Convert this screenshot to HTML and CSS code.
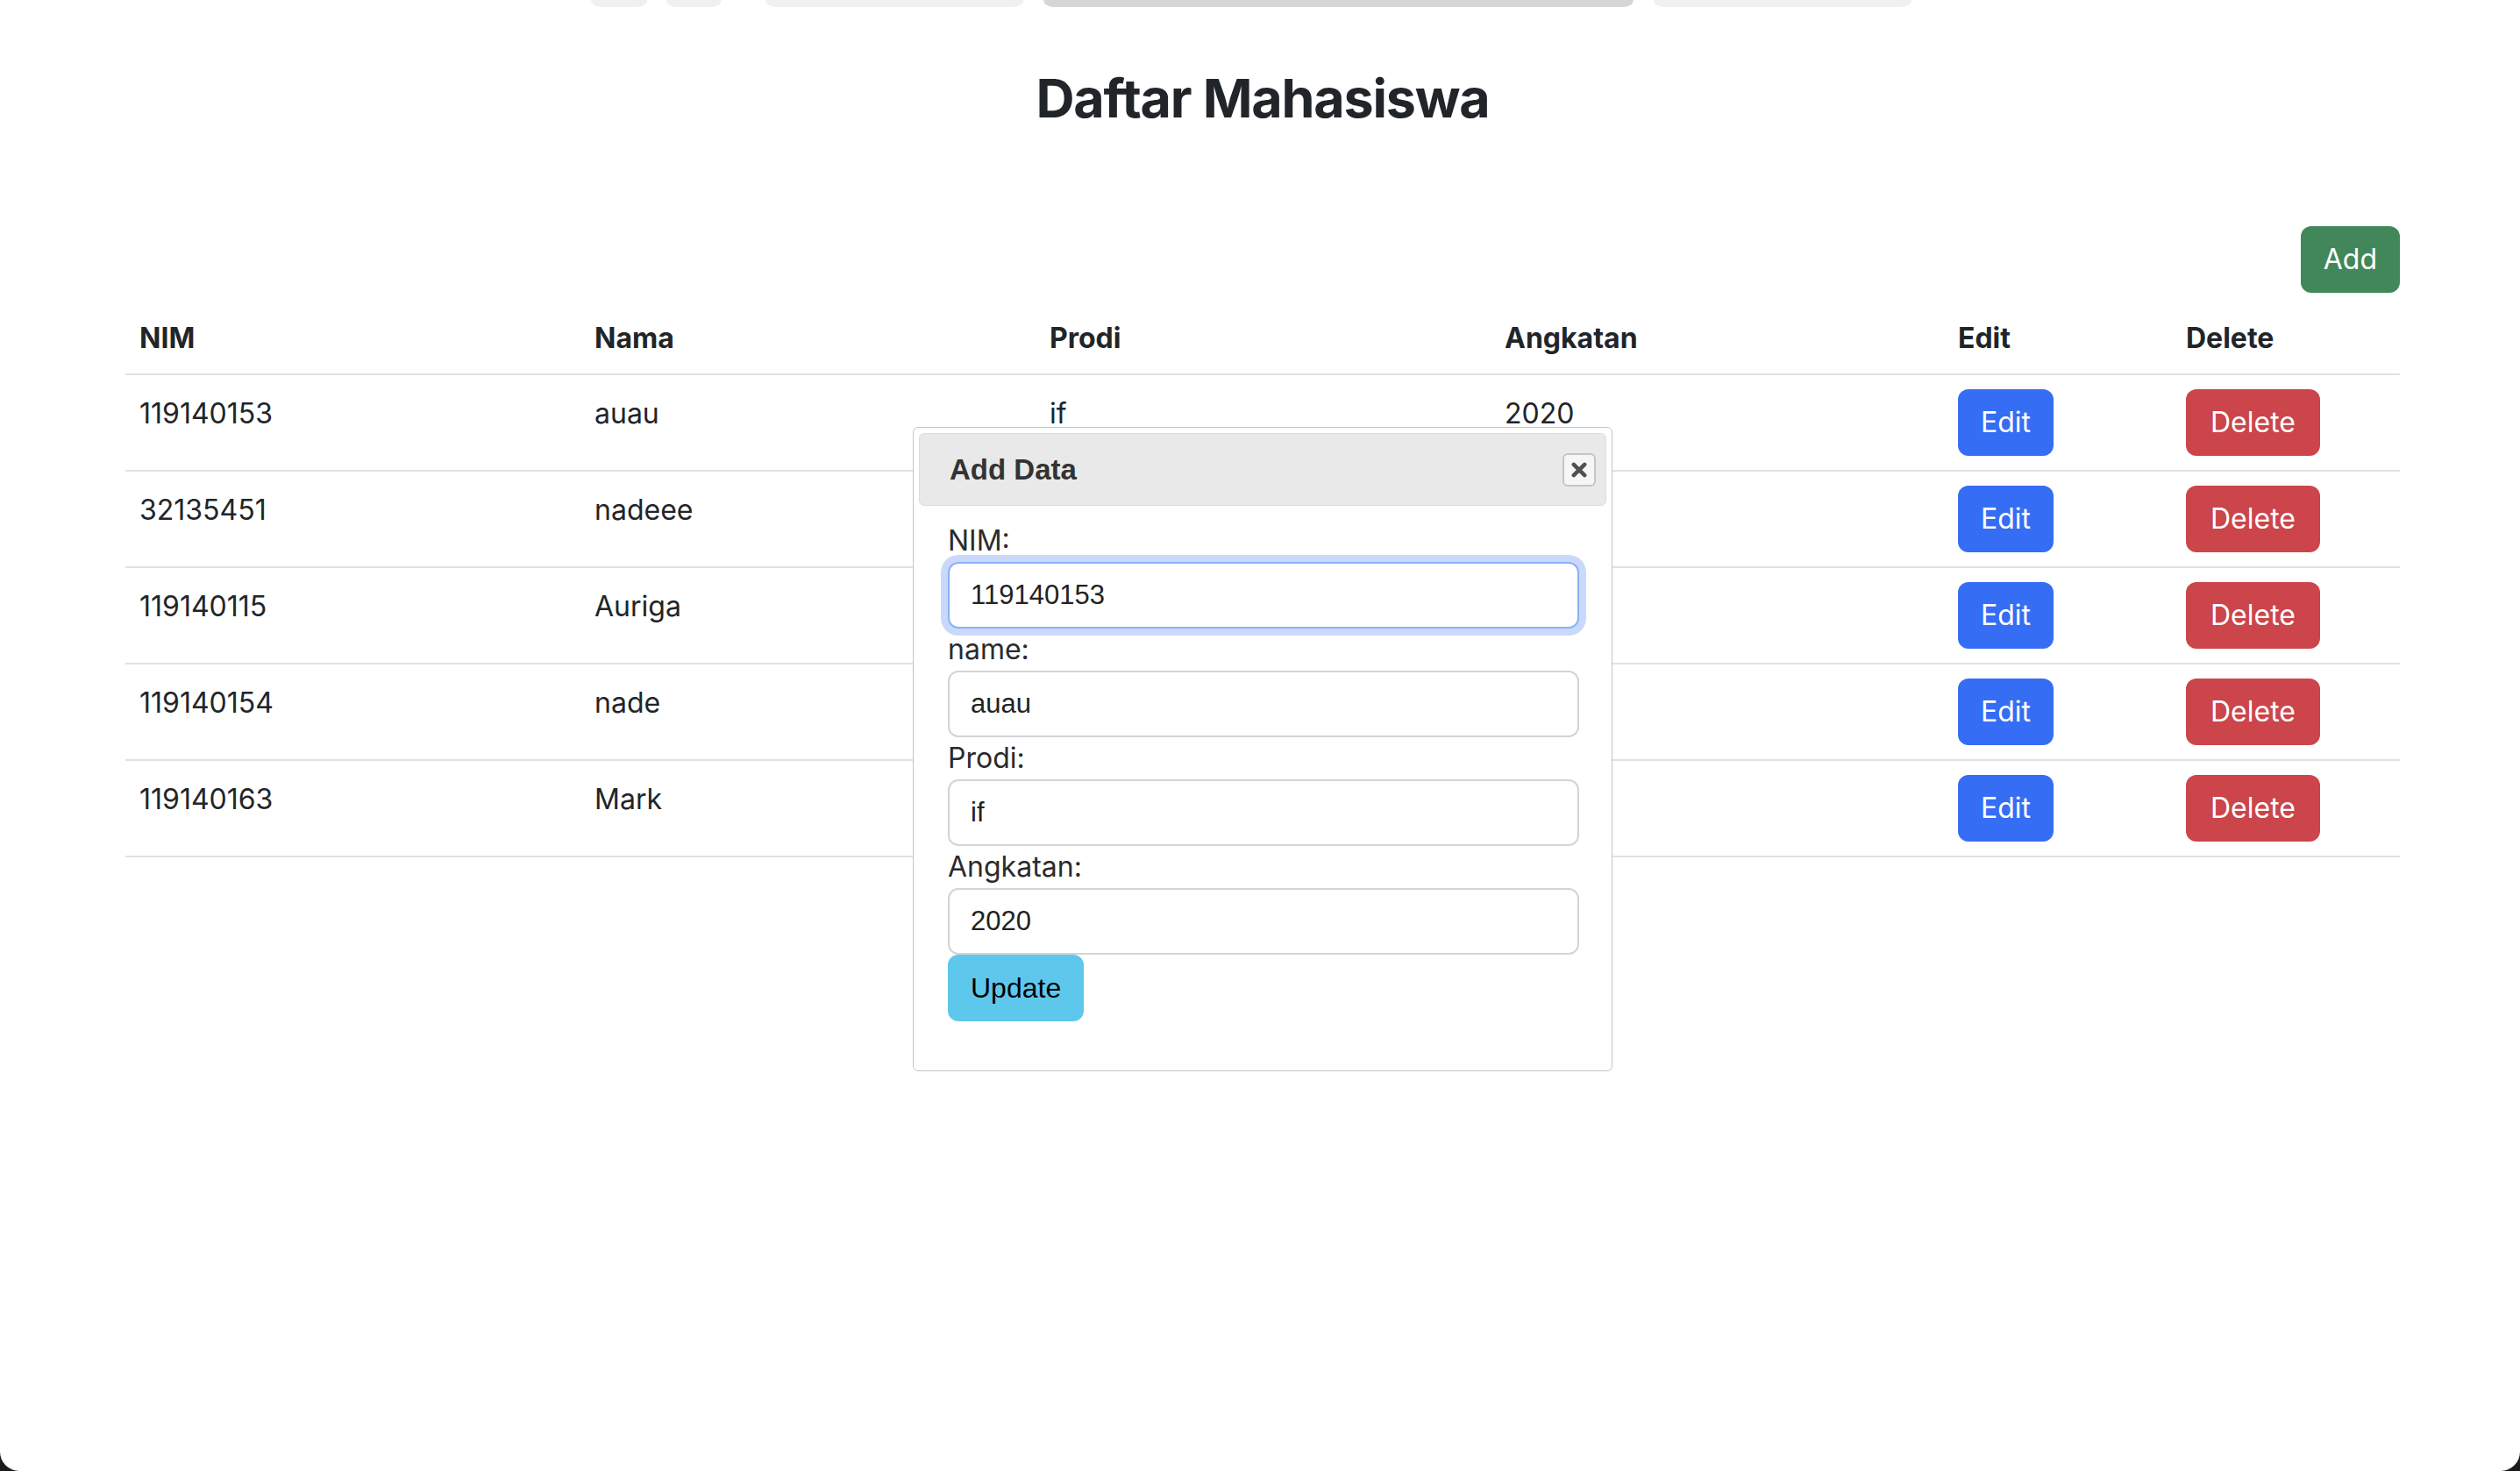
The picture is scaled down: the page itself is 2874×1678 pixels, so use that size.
FILE: index.html
```html
<!DOCTYPE html>
<html lang="id">
<head>
<meta charset="utf-8">
<title>Daftar Mahasiswa</title>
<link rel="stylesheet" href="styles.css">
</head>
<body>
<div class="window">
  <div class="tabs">
    <span class="tab tab-xs"></span>
    <span class="tab tab-xs2"></span>
    <span class="tab tab-md"></span>
    <span class="tab tab-lg"></span>
    <span class="tab tab-md2"></span>
  </div>

  <main class="container">
    <h2 class="title">Daftar Mahasiswa</h2>
    <div class="actions">
      <button class="btn btn-add">Add</button>
    </div>
    <table class="table">
      <colgroup>
        <col class="col-wide"><col class="col-wide"><col class="col-wide"><col class="col-wide2"><col class="col-btn"><col class="col-btn">
      </colgroup>
      <thead>
        <tr><th>NIM</th><th>Nama</th><th>Prodi</th><th>Angkatan</th><th>Edit</th><th>Delete</th></tr>
      </thead>
      <tbody>
        <tr><td>119140153</td><td>auau</td><td>if</td><td>2020</td><td class="cell-action"><button class="btn btn-edit">Edit</button></td><td class="cell-action"><button class="btn btn-delete">Delete</button></td></tr>
        <tr><td>32135451</td><td>nadeee</td><td>if</td><td>2020</td><td class="cell-action"><button class="btn btn-edit">Edit</button></td><td class="cell-action"><button class="btn btn-delete">Delete</button></td></tr>
        <tr><td>119140115</td><td>Auriga</td><td>if</td><td>2019</td><td class="cell-action"><button class="btn btn-edit">Edit</button></td><td class="cell-action"><button class="btn btn-delete">Delete</button></td></tr>
        <tr><td>119140154</td><td>nade</td><td>if</td><td>2019</td><td class="cell-action"><button class="btn btn-edit">Edit</button></td><td class="cell-action"><button class="btn btn-delete">Delete</button></td></tr>
        <tr><td>119140163</td><td>Mark</td><td>if</td><td>2019</td><td class="cell-action"><button class="btn btn-edit">Edit</button></td><td class="cell-action"><button class="btn btn-delete">Delete</button></td></tr>
      </tbody>
    </table>
  </main>

  <div class="dialog" role="dialog">
    <div class="dialog-titlebar">
      <span class="dialog-title">Add Data</span>
      <button class="dialog-close" title="Close">
        <svg class="close-icon" viewBox="0 0 16 16" aria-hidden="true"><path d="M2.5 2.5 L13.5 13.5 M13.5 2.5 L2.5 13.5" stroke="#505050" stroke-width="4" stroke-linecap="round" fill="none"/></svg>
      </button>
    </div>
    <div class="dialog-content">
      <form class="dialog-form">
        <label class="field-label">NIM:</label>
        <input class="field-input is-focused" type="text" value="119140153">
        <label class="field-label">name:</label>
        <input class="field-input" type="text" value="auau">
        <label class="field-label">Prodi:</label>
        <input class="field-input" type="text" value="if">
        <label class="field-label">Angkatan:</label>
        <input class="field-input" type="text" value="2020">
        <button type="button" class="btn-update">Update</button>
      </form>
    </div>
  </div>
</div>
</body>
</html>
```

FILE: styles.css
```css
html, body {
  margin: 0;
  padding: 0;
  background: #1c1c1c;
  overflow: hidden;
}

.window {
  position: relative;
  height: 1678px;
  background: #ffffff;
  border-radius: 0 0 22px 22px;
  font-family: "Inter", "Noto Sans", sans-serif;
  color: #212529;
}

/* top cut-off pills */
.tabs {
  display: flex;
  height: 8px;
  padding-left: 674px;
}
.tab {
  height: 8px;
  background: #f0f0f0;
  border-radius: 0 0 12px 12px / 0 0 8px 8px;
}
.tab-xs { width: 64px; margin-right: 22px; }
.tab-xs2 { width: 63px; margin-right: 50px; }
.tab-md { width: 294px; margin-right: 23px; }
.tab-lg { width: 673px; margin-right: 23px; background: #d6d6d6; }
.tab-md2 { width: 294px; }

.container {
  width: 2594px;
  margin-left: 143px;
}

.title {
  margin: 66px 0 0;
  font-size: 61px;
  line-height: 77px;
  font-weight: 700;
  text-align: center;
  letter-spacing: -1.2px;
}

.actions {
  display: flex;
  justify-content: flex-end;
  margin-top: 107px;
  margin-bottom: 12px;
}

.btn {
  font-family: "Inter", "Noto Sans", sans-serif;
  font-size: 32px;
  line-height: 48px;
  padding: 12px 24px;
  border: 2px solid transparent;
  border-radius: 12px;
  color: #ffffff;
  cursor: pointer;
}
.btn-add { background: #418759; padding: 12px 24px; }
.btn-edit { background: #356df5; }
.btn-delete { background: #cb454b; padding: 12px 26px; }

.table {
  width: 2594px;
  border-collapse: collapse;
  table-layout: fixed;
}
.col-wide { width: 519px; }
.col-wide2 { width: 517px; }
.col-btn { width: 260px; }

.table th,
.table td {
  padding: 16px;
  text-align: left;
  vertical-align: top;
  font-size: 32px;
  line-height: 48px;
  border-bottom: 2px solid #dee2e6;
}
.table th { font-weight: 700; }
.table td {
  font-weight: 400;
  padding: 20px 16px 12px;
}
.table td.cell-action { padding: 16px; }

/* jQuery-UI style dialog */
.dialog {
  position: absolute;
  left: 1041px;
  top: 487px;
  width: 798px;
  box-sizing: border-box;
  padding: 6px;
  background: #ffffff;
  border: 1px solid #c5c5c5;
  border-radius: 6px;
  font-family: "Liberation Sans", Arial, sans-serif;
}

.dialog-titlebar {
  display: flex;
  align-items: center;
  height: 83px;
  box-sizing: border-box;
  padding: 0 11px 0 34px;
  background: #e9e9e9;
  border: 1px solid #dddddd;
  border-radius: 6px;
}
.dialog-title {
  font-size: 33px;
  font-weight: 700;
  color: #333333;
}
.dialog-close {
  margin-left: auto;
  width: 38px;
  height: 38px;
  padding: 0;
  display: flex;
  align-items: center;
  justify-content: center;
  background: #f6f6f6;
  border: 2px solid #c5c5c5;
  border-radius: 6px;
}
.close-icon {
  width: 18px;
  height: 18px;
  display: block;
}

.dialog-content {
  padding: 16px 31px 18px 33px;
}

.dialog-form {
  display: flex;
  flex-direction: column;
  align-items: flex-start;
  margin-bottom: 32px;
}

.field-label {
  font-family: "Inter", "Noto Sans", sans-serif;
  font-size: 32px;
  line-height: 48px;
  color: #2b2b2b;
}

.field-input {
  width: 100%;
  height: 76px;
  box-sizing: border-box;
  margin: 0;
  padding: 0 24px;
  font-family: "Liberation Sans", Arial, sans-serif;
  font-size: 31px;
  color: #222222;
  background: #ffffff;
  border: 2px solid #d2d4d7;
  border-radius: 12px;
  outline: none;
}
.field-input.is-focused {
  border-color: #8ab2f4;
  box-shadow: 0 0 0 8px #cad9fb;
}

.btn-update {
  height: 76px;
  padding: 0 24px;
  font-family: "Liberation Sans", Arial, sans-serif;
  font-size: 32px;
  color: #000000;
  background: #5ec8ec;
  border: 2px solid #5ec8ec;
  border-radius: 12px;
}
```
